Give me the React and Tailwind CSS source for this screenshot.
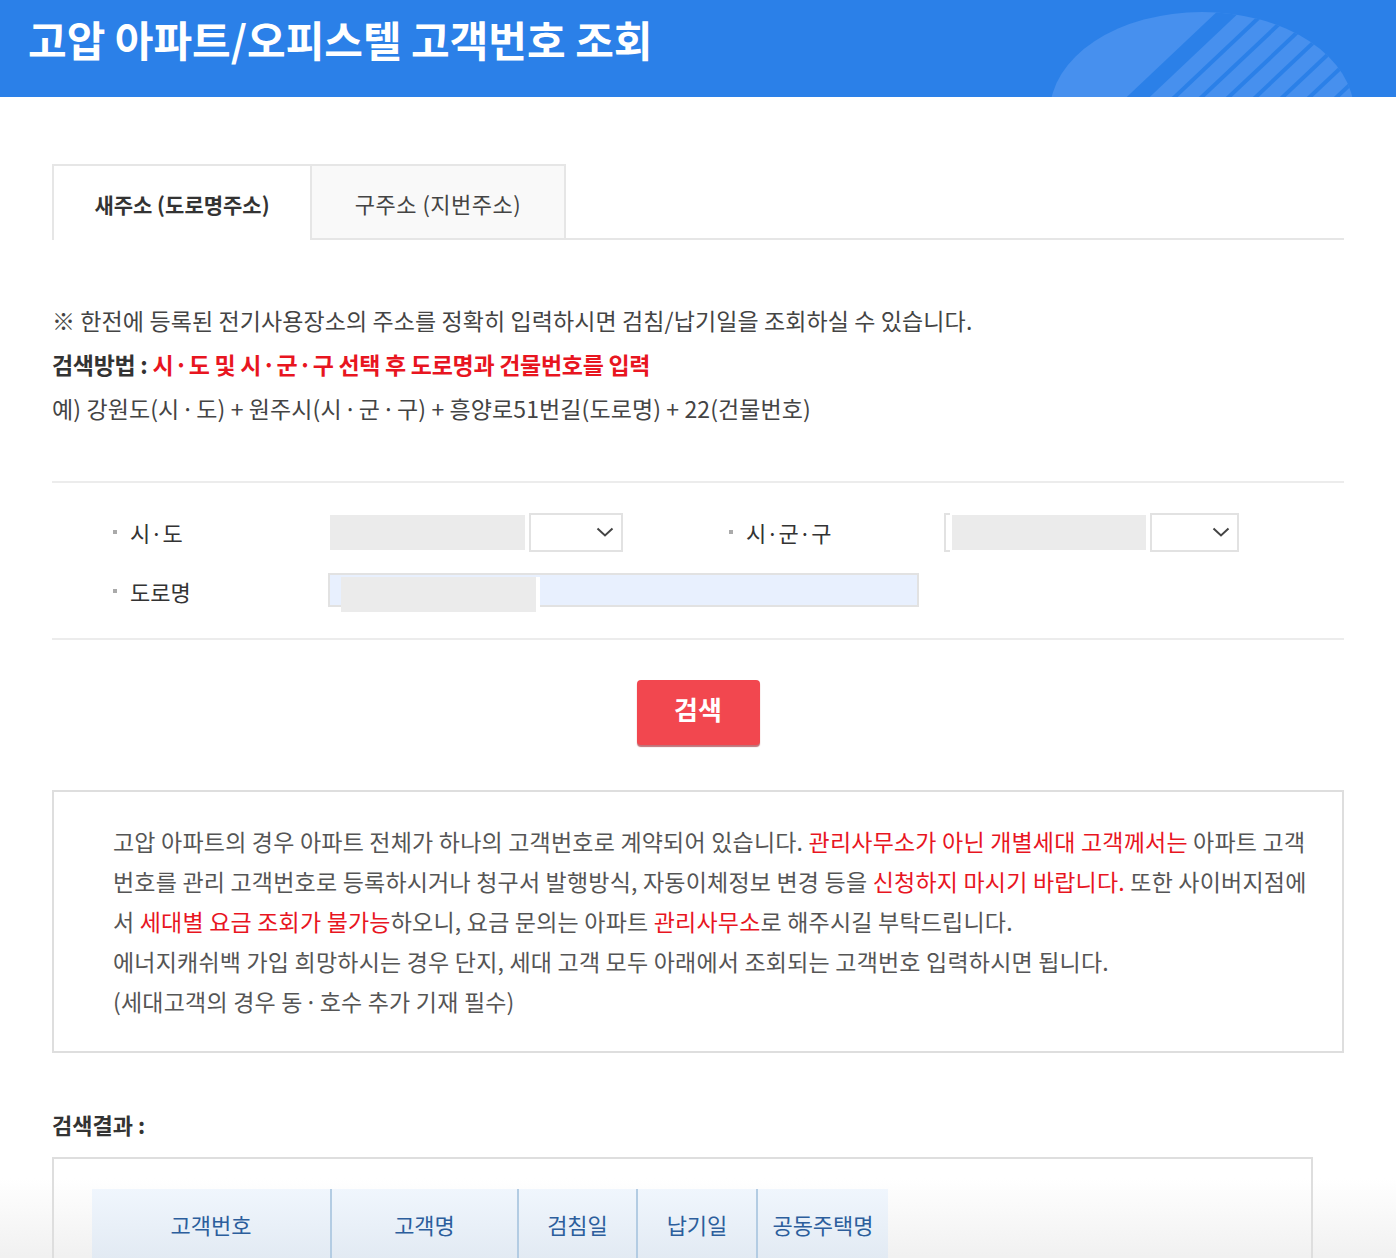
import React from "react";

const Chevron = () => (
  <svg width="18" height="10" viewBox="0 0 18 10" fill="none">
    <polyline points="1.5,1.5 9,8.5 16.5,1.5" stroke="#444" strokeWidth="2" strokeLinejoin="miter" />
  </svg>
);

const HeaderDeco = () => {
  const xs = [1265, 1292, 1319, 1346, 1373, 1400, 1427, 1454];
  return (
    <svg className="absolute left-0 top-0" width="1396" height="97" viewBox="0 0 1396 97">
      <defs>
        <clipPath id="ell">
          <ellipse cx="1202" cy="112" rx="152" ry="100" />
        </clipPath>
      </defs>
      <g clipPath="url(#ell)">
        <rect x="1040" y="0" width="330" height="97" fill="#4790ee" />
        <polygon points="1240,-10 1263,-10 1136,110 1113,110" fill="#2b80e8" />
        {xs.map((x) => (
          <line key={x} x1={x + 23} y1={-10} x2={x - 104} y2={110} stroke="#2b80e8" strokeWidth="4" />
        ))}
      </g>
    </svg>
  );
};

const R = ({ children }) => <span className="text-[#e8151f]">{children}</span>;
const D = () => <span className="mx-[2px]">·</span>;
const Db = () => <span className="mx-[1px]">·</span>;

const Bullet = () => <span className="inline-block w-[4px] h-[4px] bg-[#aaa] mr-[13px]" />;

export default function App() {
  return (
    <div className="min-h-[1258px] bg-white font-['Noto_Sans_CJK_KR','Noto_Sans',sans-serif] text-[#444]">
      <header className="relative h-[97px] bg-[#2b80e8] overflow-hidden">
        <HeaderDeco />
        <h1 className="relative pl-[28px] pt-[12px] text-[42px] leading-[54px] font-bold text-white">
          고압 아파트/오피스텔 고객번호 조회
        </h1>
      </header>

      <div className="px-[52px]">
        {/* Tabs */}
        <div className="mt-[67px] flex h-[76px]">
          <div className="w-[258px] pt-[3px] border-t-2 border-l-2 border-[#e6e6e6] bg-white flex items-center justify-center text-[21px] font-bold text-[#333]">
            새주소 (도로명주소)
          </div>
          <div className="w-[256px] pt-[3px] border-2 border-[#e6e6e6] bg-[#f9f9f9] flex items-center justify-center text-[22px] tracking-[0.5px] text-[#444]">
            구주소 (지번주소)
          </div>
          <div className="flex-1 border-b-2 border-[#e6e6e6]" />
        </div>

        {/* Intro */}
        <div className="mt-[58px] text-[23px] leading-[44px] tracking-[0.1px]">
          <p>※ 한전에 등록된 전기사용장소의 주소를 정확히 입력하시면 검침/납기일을 조회하실 수 있습니다.</p>
          <p className="font-bold text-[#333] tracking-[-0.3px]">
            검색방법 : <R>시<Db />도 및 시<Db />군<Db />구 선택 후 도로명과 건물번호를 입력</R>
          </p>
          <p>
            예) 강원도(시<D />도) + 원주시(시<D />군<D />구) + 흥양로51번길(도로명) + 22(건물번호)
          </p>
        </div>

        {/* Form */}
        <div className="mt-[51px] border-t-2 border-b-2 border-[#ececec] pt-[29px] pb-[27px] text-[22px] text-[#333]">
          <div className="flex items-center h-[40px]">
            <div className="w-[217px] ml-[61px] flex items-center">
              <Bullet />
              <span>시·도</span>
            </div>
            <div className="flex items-center w-[399px]">
              <div className="w-[195px] h-[35px] bg-[#ebebeb]" />
              <div className="ml-[4px] w-[94px] h-[39px] border-2 border-[#e2e2e2] flex items-center justify-end pr-[7px]">
                <Chevron />
              </div>
            </div>
            <div className="w-[215px] flex items-center">
              <Bullet />
              <span>시·군·구</span>
            </div>
            <div className="flex items-center">
              <div className="w-[6px] h-[39px] border-2 border-r-0 border-[#e2e2e2]" />
              <div className="ml-[2px] w-[194px] h-[35px] bg-[#ebebeb]" />
              <div className="ml-[4px] w-[89px] h-[39px] border-2 border-[#e2e2e2] flex items-center justify-end pr-[7px]">
                <Chevron />
              </div>
            </div>
          </div>
          <div className="flex items-center h-[40px] mt-[19px]">
            <div className="w-[215px] ml-[61px] flex items-center">
              <Bullet />
              <span>도로명</span>
            </div>
            <div className="relative w-[591px] h-[34px] -mt-[2px] bg-[#e8f0fe] border-2 border-[#e2e2e2]">
              <div className="absolute left-[11px] top-[2px] w-[199px] h-[35px] bg-[#ebebeb] border-r-4 border-white" />
            </div>
          </div>
        </div>

        {/* Button */}
        <div className="mt-[40px] flex justify-center">
          <button className="w-[123px] h-[65px] rounded-[4px] bg-[#f2474f] shadow-[0_2px_1px_rgba(150,20,30,0.6)] text-white text-[26px] font-bold leading-none pb-[8px]">
            검색
          </button>
        </div>

        {/* Notice */}
        <div className="mt-[45px] border-2 border-[#dedede] pl-[59px] pt-[29px] pb-[30px] text-[23px] leading-[40px] tracking-[0.2px] text-[#555] whitespace-nowrap">
          <p>
            고압 아파트의 경우 아파트 전체가 하나의 고객번호로 계약되어 있습니다. <R>관리사무소가 아닌 개별세대 고객께서는</R> 아파트 고객
          </p>
          <p>
            번호를 관리 고객번호로 등록하시거나 청구서 발행방식, 자동이체정보 변경 등을 <R>신청하지 마시기 바랍니다.</R> 또한 사이버지점에
          </p>
          <p>
            서 <R>세대별 요금 조회가 불가능</R>하오니, 요금 문의는 아파트 <R>관리사무소</R>로 해주시길 부탁드립니다.
          </p>
          <p>에너지캐쉬백 가입 희망하시는 경우 단지, 세대 고객 모두 아래에서 조회되는 고객번호 입력하시면 됩니다.</p>
          <p>
            (세대고객의 경우 동<D />호수 추가 기재 필수)
          </p>
        </div>
      </div>

      {/* Results */}
      <div className="mt-[49px] px-[52px] pb-[60px] bg-[linear-gradient(to_bottom,#ffffff_0px,#ffffff_76px,#f1f1f1_154px,#f1f1f1_100%)]">
        <h2 className="text-[22px] leading-[44px] font-bold text-[#333]">검색결과 :</h2>
        <div className="mt-[11px] w-[1261px] border-2 border-[#dedede] pt-[30px] px-[38px] pb-[30px]">
          <div className="inline-flex h-[70px] text-[22px] text-[#2c5e9c] bg-[linear-gradient(to_bottom,#f0f6fd,#e2eaf3)]">
            <div className="w-[238px] flex items-center justify-center">고객번호</div>
            <div className="w-[187px] flex items-center justify-center border-l-2 border-[#b3cce3]">고객명</div>
            <div className="w-[119px] flex items-center justify-center border-l-2 border-[#b3cce3]">검침일</div>
            <div className="w-[120px] flex items-center justify-center border-l-2 border-[#b3cce3]">납기일</div>
            <div className="w-[132px] flex items-center justify-center border-l-2 border-[#b3cce3]">공동주택명</div>
          </div>
          <div className="h-[60px]" />
        </div>
      </div>
    </div>
  );
}
